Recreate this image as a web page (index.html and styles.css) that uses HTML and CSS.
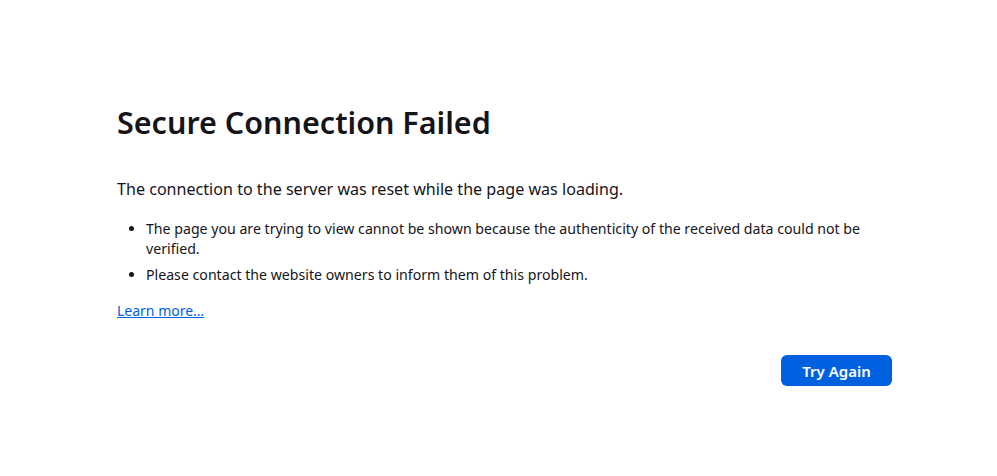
FILE: index.html
```html
<!DOCTYPE html>
<html lang="en">
<head>
<meta charset="utf-8">
<title>Problem loading page</title>
<link rel="stylesheet" href="styles.css">
</head>
<body>
<main class="container">
  <h1 class="title">Secure Connection Failed</h1>
  <p class="lead">The connection to the server was reset while the page was loading.</p>
  <ul class="list">
    <li>The page you are trying to view cannot be shown because the authenticity of the received data could not be verified.</li>
    <li>Please contact the website owners to inform them of this problem.</li>
  </ul>
  <a class="learn" href="#">Learn more…</a>
  <div class="actions">
    <button class="primary" type="button">Try Again</button>
  </div>
</main>
</body>
</html>
```

FILE: styles.css
```css
html, body {
  margin: 0;
  padding: 0;
  background: #ffffff;
}
body {
  font-family: "Noto Sans", "Open Sans", sans-serif;
  color: #15141a;
}
.container {
  width: 775px;
  margin: 0 0 0 117px;
  padding-top: 97px;
}
.title {
  margin: 0;
  font-size: 30.5px;
  font-weight: 600;
  line-height: 50px;
}
.lead {
  margin: 30px 0 0 0;
  font-size: 16.1px;
  line-height: 24px;
}
.list {
  margin: 18px 0 0 0;
  padding-left: 29px;
  font-size: 14.15px;
  line-height: 20px;
}
.list li {
  margin-bottom: 6px;
}
.learn {
  display: inline-block;
  margin-top: 10px;
  font-size: 14px;
  line-height: 20px;
  color: #0061e0;
  text-decoration: underline;
}
.actions {
  display: flex;
  justify-content: flex-end;
  margin-top: 34px;
}
.primary {
  width: 111px;
  height: 31px;
  border: none;
  border-radius: 6px;
  background: #0061e0;
  color: #ffffff;
  font-family: inherit;
  font-size: 15px;
  font-weight: 600;
}
```
